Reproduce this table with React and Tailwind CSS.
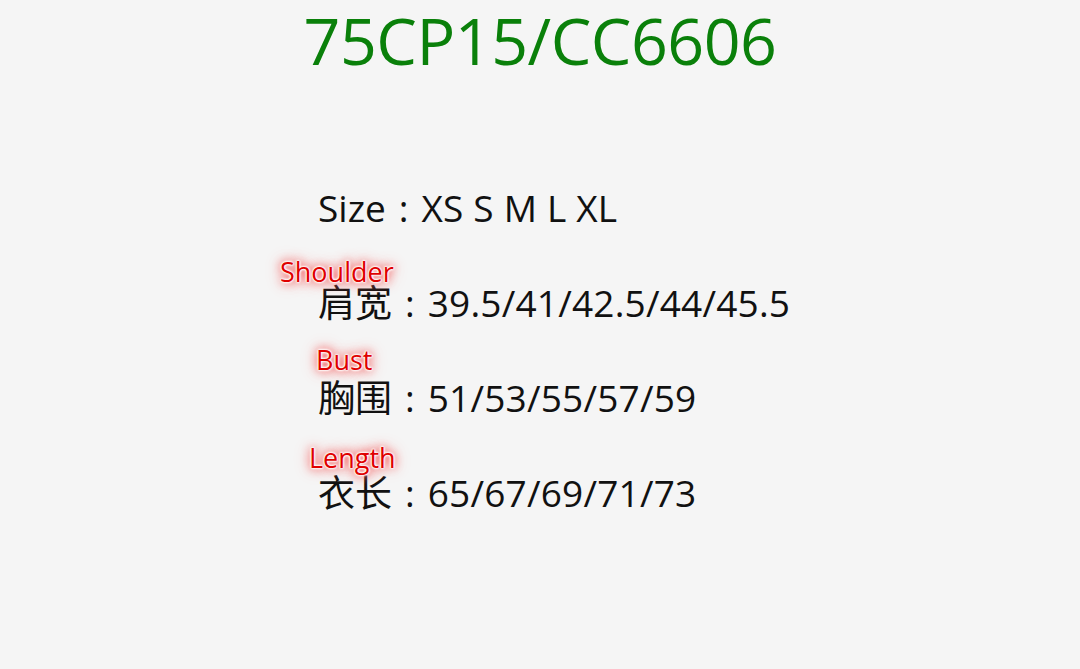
import React from 'react';

const rows = [
  { key: 'size', label: null, name: 'Size', value: 'XS S M L XL' },
  { key: 'shoulder', label: { text: 'Shoulder', cls: 'left-[-38px] top-[-21px]' }, name: '肩宽', value: '39.5/41/42.5/44/45.5' },
  { key: 'bust', label: { text: 'Bust', cls: 'left-[-2px] top-[-28px]' }, name: '胸围', value: '51/53/55/57/59' },
  { key: 'length', label: { text: 'Length', cls: 'left-[-9px] top-[-25px]' }, name: '衣长', value: '65/67/69/71/73' },
];

function Label({ text, cls }) {
  return (
    <span
      className={`absolute text-[27px] leading-none text-[#e00000] [text-shadow:0_0_1px_#fff,0_0_2px_#fff,0_0_2px_#fff,0_0_3px_#fff,0_0_3px_#fff,0_0_8px_#e44,0_0_12px_#f66,0_0_18px_#f99] ${cls}`}
    >
      {text}
    </span>
  );
}

export default function App() {
  return (
    <div className="w-[1080px] h-[669px] bg-[#f5f5f5] overflow-hidden font-['Open_Sans','Noto_Sans_CJK_SC',sans-serif]">
      <h1 className="text-center text-[64.5px] leading-[80px] text-[#0a800a] tracking-[-0.5px]">
        75CP15/CC6606
      </h1>
      <div className="pl-[318px] mt-[104px] flex flex-col gap-[47px] text-[#111] text-[37px] leading-[48px]">
        {rows.map((r) => (
          <div key={r.key} className="relative whitespace-nowrap">
            {r.label && <Label {...r.label} />}
            <span>{r.name}</span>
            <span className="mx-[13px]">:</span>
            <span className="tracking-[0.2px]">{r.value}</span>
          </div>
        ))}
      </div>
    </div>
  );
}
